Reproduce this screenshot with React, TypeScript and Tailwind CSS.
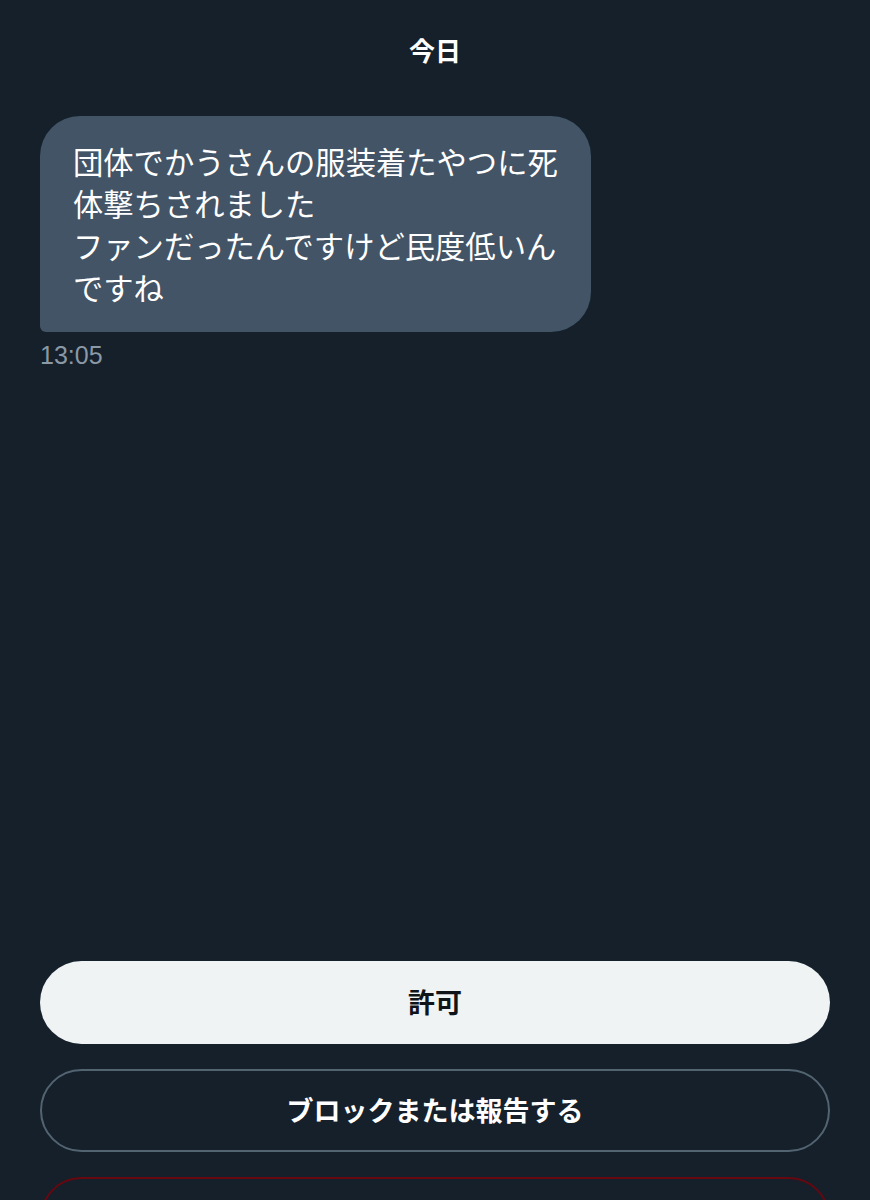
import React from 'react';

const jp = { fontFamily: '"Noto Sans CJK JP", "Noto Sans", sans-serif' };

export default function App() {
  return (
    <div className="h-[1200px] w-full overflow-hidden bg-[#15202b] flex flex-col text-white" style={jp}>
      {/* Date header */}
      <div className="h-[100px] flex items-center justify-center">
        <span className="text-[26px] font-bold leading-none">今日</span>
      </div>

      {/* Message */}
      <div className="mt-4 px-10">
        <div className="w-[551px] bg-[#425466] rounded-[40px] rounded-bl-[6px] pl-[33px] pr-[28px] py-6 text-[30.3px] leading-[42px] text-white">
          団体でかうさんの服装着たやつに死体撃ちされました
          <br />
          ファンだったんですけど民度低いんですね
        </div>
        <div
          className="mt-[9px] text-[25px] leading-7 text-[#8b98a5]"
          style={{ fontFamily: '"Liberation Sans", "Noto Sans CJK JP", sans-serif' }}
        >
          13:05
        </div>
      </div>

      <div className="flex-1" />

      {/* Actions */}
      <div className="px-10 flex flex-col gap-[25px] mb-[-60px]">
        <button className="h-[83px] rounded-full bg-[#eff3f4] text-[#0f1419] text-[27px] font-bold">
          許可
        </button>
        <button className="h-[83px] rounded-full border-2 border-[#536471] text-white text-[27px] font-bold">
          ブロックまたは報告する
        </button>
        {/* third action is cut off by the bottom edge */}
        <div className="h-[83px] rounded-full border-2 border-[#67070f]" />
      </div>
    </div>
  );
}
